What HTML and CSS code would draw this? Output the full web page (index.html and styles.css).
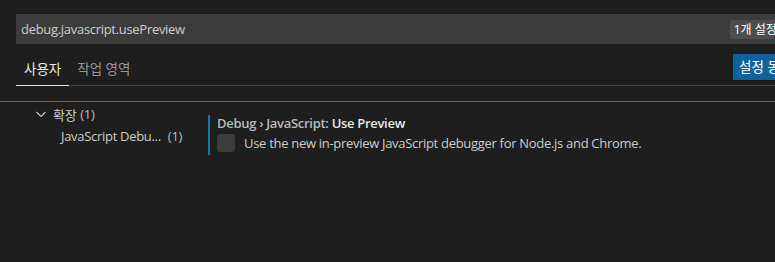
FILE: index.html
```html
<!DOCTYPE html>
<html lang="ko">
<head>
<meta charset="utf-8">
<link rel="stylesheet" href="styles.css">
</head>
<body>
<div class="editor">
  <div class="header">
    <div class="search">
      <span class="query">debug.javascript.usePreview</span>
      <span class="badge">1개 설정 찾음</span>
    </div>
    <div class="tabs-row">
      <div class="tabs">
        <span class="tab active">사용자</span>
        <span class="tab">작업 영역</span>
      </div>
      <span class="sync-btn">설정 동기화 켜기</span>
    </div>
  </div>
  <div class="body">
    <div class="toc">
      <div class="toc-row group">
        <svg class="chev" width="16" height="16" viewBox="0 0 16 16"><path d="M3.5 6l4.5 4.5L12.5 6" fill="none" stroke="#c5c5c5" stroke-width="1.1"/></svg>
        <span class="toc-label">확장</span><span class="count">(1)</span>
      </div>
      <div class="toc-row child">
        <span class="toc-label">JavaScript Debu...</span><span class="count">(1)</span>
      </div>
    </div>
    <div class="settings">
      <div class="setting">
        <div class="title"><span class="cat">Debug › JavaScript: </span><span class="name">Use Preview</span></div>
        <div class="desc-row">
          <span class="checkbox"></span>
          <span class="desc">Use the new in-preview JavaScript debugger for Node.js and Chrome.</span>
        </div>
      </div>
    </div>
  </div>
</div>
</body>
</html>
```

FILE: styles.css
```css
html, body {
  margin: 0;
  padding: 0;
  background: #1e1e1e;
  overflow: hidden;
  width: 775px;
  height: 262px;
}
.editor {
  width: 855px;
  font-family: "Open Sans", "Noto Sans CJK KR", sans-serif;
  font-size: 13px;
  letter-spacing: -0.3px;
  color: #cccccc;
}
.header {
  padding: 14px 16px 0 16px;
}
.search {
  height: 30px;
  background: #3c3c3c;
  display: flex;
  align-items: center;
  padding-left: 5px;
}
.query {
  flex: 1;
  color: #cccccc;
}
.badge {
  background: #4d4d4d;
  color: #ffffff;
  font-size: 12px;
  letter-spacing: 0;
  border-radius: 2px;
  padding: 0 4px;
  height: 19px;
  line-height: 19px;
  margin-right: 33px;
}
.tabs-row {
  display: flex;
  justify-content: space-between;
  align-items: flex-start;
  margin-top: 10px;
  height: 31px;
  border-bottom: 1px solid #474747;
}
.tabs {
  display: flex;
  height: 32px;
}
.tab {
  padding: 0 8px;
  line-height: 31px;
  height: 31px;
  color: rgba(231, 231, 231, 0.6);
  font-size: 13.5px;
  letter-spacing: 0;
}
.tab.active {
  color: #e7e7e7;
  border-bottom: 1px solid #e7e7e7;
}
.sync-btn {
  background: #0e639c;
  color: #ffffff;
  height: 26px;
  line-height: 26px;
  padding: 0 6px;
  font-size: 13.5px;
  letter-spacing: 0;
}
.body {
  margin-top: 15px;
  border-top: 1px solid #007fd4;
  display: flex;
}
.toc {
  width: 208px;
  padding-top: 1px;
}
.toc-row {
  height: 22px;
  display: flex;
  align-items: center;
}
.toc-row.group {
  padding-left: 33px;
}
.chev {
  margin-right: 4px;
}
.toc-row.child {
  padding-left: 61px;
}
.count {
  margin-left: 4px;
  color: #bbbbbb;
}
.toc-row.child .count {
  margin-left: 7px;
}
.settings {
  padding-top: 13px;
}
.setting {
  border-left: 2px solid #0c7d9d;
  padding-left: 7px;
  height: 40px;
}
.title {
  font-weight: 600;
  line-height: 16px;
  height: 18px;
}
.cat {
  color: #bbbbbb;
}
.name {
  color: #e7e7e7;
}
.desc-row {
  display: flex;
  align-items: center;
  gap: 9px;
}
.checkbox {
  width: 18px;
  height: 18px;
  background: #3c3c3c;
  border-radius: 3px;
  display: inline-block;
}
.desc {
  color: #cccccc;
  line-height: 18px;
  margin-top: 1px;
}
```
